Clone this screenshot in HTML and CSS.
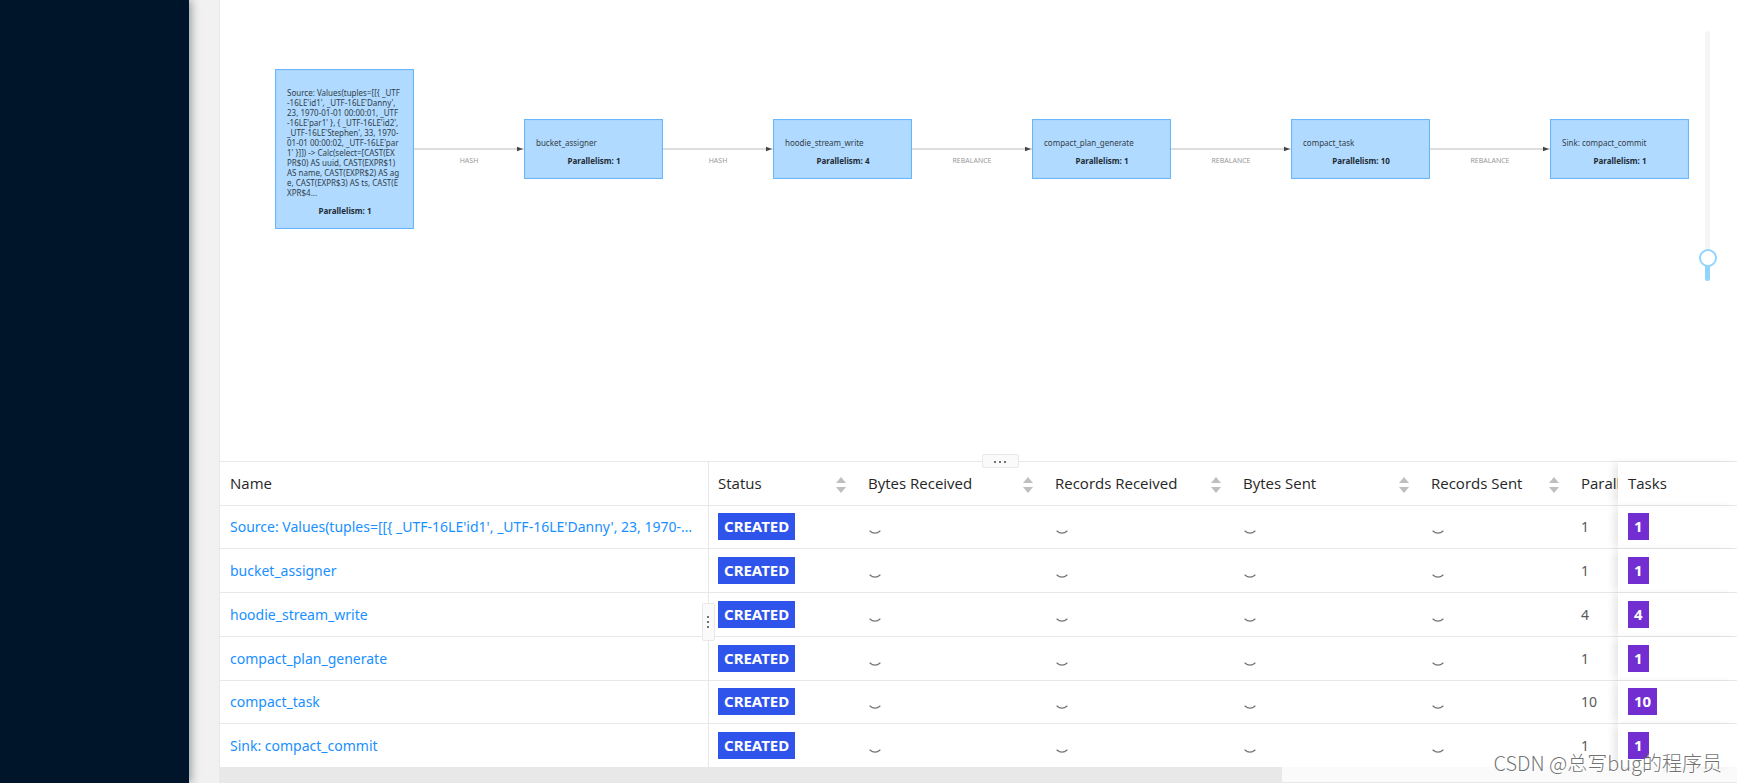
FILE: index.html
```html
<!DOCTYPE html>
<html lang="en">
<head>
<meta charset="utf-8">
<title>Job Overview</title>
<link rel="stylesheet" href="styles.css">
</head>
<body>
<svg class="defs" aria-hidden="true">
  <symbol id="sort" viewBox="0 0 10 16"><path d="M5 0 10 6H0zM0 10h10L5 16z"/></symbol>
  <symbol id="none" viewBox="0 0 12 5"><path d="M.6.8Q6 5.6 11.4.8" fill="none" stroke="currentColor" stroke-width="1.2"/></symbol>
  <symbol id="arrow" viewBox="0 0 6 6"><path d="M0 .8 6 3 0 5.2z"/></symbol>
</svg>
<div class="layout">
  <aside class="sidebar"></aside>
  <main class="content">
    <section class="graph">
      <div class="flow">
        <div class="node"><p class="node-name">Source: Values(tuples=[[{ _UTF<br>-16LE'id1', _UTF-16LE'Danny',<br>23, 1970-01-01 00:00:01, _UTF<br>-16LE'par1' }, { _UTF-16LE'id2',<br>_UTF-16LE'Stephen', 33, 1970-<br>01-01 00:00:02, _UTF-16LE'par<br>1' }]]) -&gt; Calc(select=[CAST(EX<br>PR$0) AS uuid, CAST(EXPR$1)<br>AS name, CAST(EXPR$2) AS ag<br>e, CAST(EXPR$3) AS ts, CAST(E<br>XPR$4...</p><p class="node-par">Parallelism: 1</p></div>
        <div class="edge short"><div class="line"><svg class="arrow"><use href="#arrow"/></svg></div><span>HASH</span></div>
        <div class="node"><p class="node-name">bucket_assigner</p><p class="node-par">Parallelism: 1</p></div>
        <div class="edge short"><div class="line"><svg class="arrow"><use href="#arrow"/></svg></div><span>HASH</span></div>
        <div class="node"><p class="node-name">hoodie_stream_write</p><p class="node-par">Parallelism: 4</p></div>
        <div class="edge"><div class="line"><svg class="arrow"><use href="#arrow"/></svg></div><span>REBALANCE</span></div>
        <div class="node"><p class="node-name">compact_plan_generate</p><p class="node-par">Parallelism: 1</p></div>
        <div class="edge"><div class="line"><svg class="arrow"><use href="#arrow"/></svg></div><span>REBALANCE</span></div>
        <div class="node"><p class="node-name">compact_task</p><p class="node-par">Parallelism: 10</p></div>
        <div class="edge"><div class="line"><svg class="arrow"><use href="#arrow"/></svg></div><span>REBALANCE</span></div>
        <div class="node"><p class="node-name">Sink: compact_commit</p><p class="node-par">Parallelism: 1</p></div>
      </div>
      <input class="zoom" type="range" min="0" max="100" value="6" aria-label="Zoom">
    </section>
    <section class="vertices">
      <button class="grip grip-top" aria-label="Resize panel"><i></i><i></i><i></i></button>
      <button class="grip grip-side" aria-label="Resize name column"><i></i><i></i><i></i></button>
      <table>
        <colgroup><col class="c-name"><col class="c-small"><col class="c-wide"><col class="c-wide"><col class="c-wide"><col class="c-small"><col><col class="c-tasks"></colgroup>
        <thead>
          <tr>
            <th class="name">Name</th>
            <th><div class="head">Status<svg class="sort"><use href="#sort"/></svg></div></th>
            <th><div class="head">Bytes Received<svg class="sort"><use href="#sort"/></svg></div></th>
            <th><div class="head">Records Received<svg class="sort"><use href="#sort"/></svg></div></th>
            <th><div class="head">Bytes Sent<svg class="sort"><use href="#sort"/></svg></div></th>
            <th><div class="head">Records Sent<svg class="sort"><use href="#sort"/></svg></div></th>
            <th class="par">Parallelism</th>
            <th class="tasks">Tasks</th>
          </tr>
        </thead>
        <tbody>
          <tr><td class="name"><a href="#">Source: Values(tuples=[[{ _UTF-16LE'id1', _UTF-16LE'Danny', 23, 1970-01-01 00:00:01</a></td><td><span class="tag">CREATED</span></td><td><svg class="none"><use href="#none"/></svg></td><td><svg class="none"><use href="#none"/></svg></td><td><svg class="none"><use href="#none"/></svg></td><td><svg class="none"><use href="#none"/></svg></td><td class="par">1</td><td class="tasks"><span class="tag count">1</span></td></tr>
          <tr><td class="name"><a href="#">bucket_assigner</a></td><td><span class="tag">CREATED</span></td><td><svg class="none"><use href="#none"/></svg></td><td><svg class="none"><use href="#none"/></svg></td><td><svg class="none"><use href="#none"/></svg></td><td><svg class="none"><use href="#none"/></svg></td><td class="par">1</td><td class="tasks"><span class="tag count">1</span></td></tr>
          <tr><td class="name"><a href="#">hoodie_stream_write</a></td><td><span class="tag">CREATED</span></td><td><svg class="none"><use href="#none"/></svg></td><td><svg class="none"><use href="#none"/></svg></td><td><svg class="none"><use href="#none"/></svg></td><td><svg class="none"><use href="#none"/></svg></td><td class="par">4</td><td class="tasks"><span class="tag count">4</span></td></tr>
          <tr><td class="name"><a href="#">compact_plan_generate</a></td><td><span class="tag">CREATED</span></td><td><svg class="none"><use href="#none"/></svg></td><td><svg class="none"><use href="#none"/></svg></td><td><svg class="none"><use href="#none"/></svg></td><td><svg class="none"><use href="#none"/></svg></td><td class="par">1</td><td class="tasks"><span class="tag count">1</span></td></tr>
          <tr><td class="name"><a href="#">compact_task</a></td><td><span class="tag">CREATED</span></td><td><svg class="none"><use href="#none"/></svg></td><td><svg class="none"><use href="#none"/></svg></td><td><svg class="none"><use href="#none"/></svg></td><td><svg class="none"><use href="#none"/></svg></td><td class="par">10</td><td class="tasks"><span class="tag count">10</span></td></tr>
          <tr><td class="name"><a href="#">Sink: compact_commit</a></td><td><span class="tag">CREATED</span></td><td><svg class="none"><use href="#none"/></svg></td><td><svg class="none"><use href="#none"/></svg></td><td><svg class="none"><use href="#none"/></svg></td><td><svg class="none"><use href="#none"/></svg></td><td class="par">1</td><td class="tasks"><span class="tag count">1</span></td></tr>
        </tbody>
      </table>
      <div class="scrollbar"><div class="thumb"></div></div>
    </section>
  </main>
</div>
<div class="watermark">CSDN @总写bug的程序员</div>
</body>
</html>
```
FILE: styles.css
```css
* { box-sizing: border-box; }
body {
  margin: 0;
  overflow: hidden;
  background: #f1f1f1;
  color: #262626;
  font: 15px/24px "Noto Sans", "Open Sans", "Noto Sans CJK SC", sans-serif;
}
p { margin: 0; }
.defs { position: absolute; width: 0; height: 0; }

.layout { display: flex; min-height: 100vh; }
.sidebar {
  flex: 0 0 189px;
  margin-right: 30px;
  background: #001529;
  box-shadow: 2px 0 9px rgba(0, 21, 41, .4);
}
.content {
  flex: 1;
  min-width: 0;
  display: flex;
  flex-direction: column;
  border-left: 1px solid #e8e8e8;
  background: #fff;
}

.graph {
  flex: 1;
  display: flex;
  justify-content: space-between;
  align-items: flex-start;
  padding: 31px 20px 0 55px;
}
.flow { flex: 1; display: flex; align-items: center; padding-top: 38px; max-width: 1414px; }
.node {
  flex: 0 0 139px;
  padding: 18px 0 12px 11px;
  border: 1px solid #69b6fb;
  outline: 1px solid #a9d7ff;
  outline-offset: -2px;
  background: #b0daff;
  font-size: 8px;
  line-height: 10px;
  color: #333e48;
  white-space: nowrap;
}
.node-par { margin: 8px 10px 0 0; text-align: center; font-weight: 700; color: #1f2a33; }
.edge {
  flex: 120 1 0;
  display: flex;
  flex-direction: column;
  align-items: center;
  padding-top: 13px;
  font-size: 7px;
  line-height: 8px;
  color: #999;
}
.edge.short { flex-grow: 110; }
.edge span { margin-top: 5px; }
.line {
  align-self: stretch;
  display: flex;
  justify-content: flex-end;
  height: 6px;
  padding-right: 1px;
  background: linear-gradient(#ddd, #ddd) center / 100% 2px no-repeat;
}
.arrow { width: 6px; height: 6px; fill: #444; }

.zoom {
  appearance: none;
  writing-mode: vertical-lr;
  direction: rtl;
  width: 19px;
  height: 250px;
  margin: 0;
  background: none;
}
.zoom::-webkit-slider-runnable-track {
  width: 5px;
  height: 250px;
  border-radius: 3px;
  background: linear-gradient(to top, #91d5ff 9%, #f5f5f5 9%);
}
.zoom::-webkit-slider-thumb {
  appearance: none;
  width: 18px;
  height: 18px;
  margin-left: -6px;
  border: 2px solid #91d5ff;
  border-radius: 50%;
  background: #fff;
}

.vertices { position: relative; border-top: 1px solid #e8e8e8; }
table { width: 100%; table-layout: fixed; border-collapse: separate; border-spacing: 0; }
.c-name { width: 489px; }
.c-small { width: 150px; }
.c-wide { width: 187px; }
.c-wide + .c-wide { width: 188px; }
.c-tasks { width: 119px; }
th, td {
  height: 44px;
  padding: 0 9px;
  border-bottom: 1px solid #e8e8e8;
  text-align: left;
  font-weight: 400;
  white-space: nowrap;
}
th { padding-bottom: 2px; font-family: "Open Sans", "Noto Sans", sans-serif; }
td { color: #595959; }
tr:nth-child(4n + 1) td, tr:last-child td { height: 43px; }
tr:last-child td { border-bottom: 0; }
.name {
  padding-left: 10px;
  border-right: 1px solid #e8e8e8;
  overflow: hidden;
  text-overflow: ellipsis;
}
.name a { color: #1890ff; text-decoration: none; }
td.name { color: #1890ff; font-size: 14px; }
td.par { font-size: 14px; }
.par { overflow: hidden; padding-right: 0; }
.tasks {
  position: sticky;
  right: 0;
  padding-left: 10px;
  background: #fff;
  box-shadow: -6px 0 8px -2px rgba(0, 0, 0, .1);
}
.head { display: flex; justify-content: space-between; align-items: center; padding-right: 4px; }
.sort { width: 10px; height: 16px; margin-top: 4px; fill: #bfbfbf; }
.none { display: block; width: 12px; height: 5px; margin: 11px 0 0 1px; color: #737373; }
.tag {
  display: inline-block;
  margin-bottom: 1px;
  padding: 0 6px;
  background: #2f54eb;
  color: #fff;
  font-weight: 700;
  line-height: 27px;
  vertical-align: middle;
}
.count { background: #722ed1; }

.grip {
  position: absolute;
  z-index: 2;
  display: flex;
  justify-content: center;
  align-items: center;
  gap: 3px;
  padding: 0;
  border: 1px solid #e8e8e8;
  border-radius: 2px;
  background: #fafafa;
}
.grip i { width: 2px; height: 2px; border-radius: 50%; background: #444; }
.grip-top { top: -8px; left: 50%; width: 37px; height: 14px; margin-left: 3px; padding-top: 2px; }
.grip-side { left: 482px; top: 141px; width: 13px; height: 38px; padding-right: 2px; flex-direction: column; }

.scrollbar { height: 16px; background: #fafafa; border-bottom: 1px solid #e8e8e8; }
.thumb { width: 70%; height: 16px; background: #e8e8e8; }
.watermark {
  position: absolute;
  right: 15px;
  bottom: 5px;
  z-index: 3;
  font: 300 20px/30px "Noto Sans CJK SC", sans-serif;
  color: rgba(90, 90, 90, .85);
  text-shadow: 1px 1px 1px #fff;
}
```
